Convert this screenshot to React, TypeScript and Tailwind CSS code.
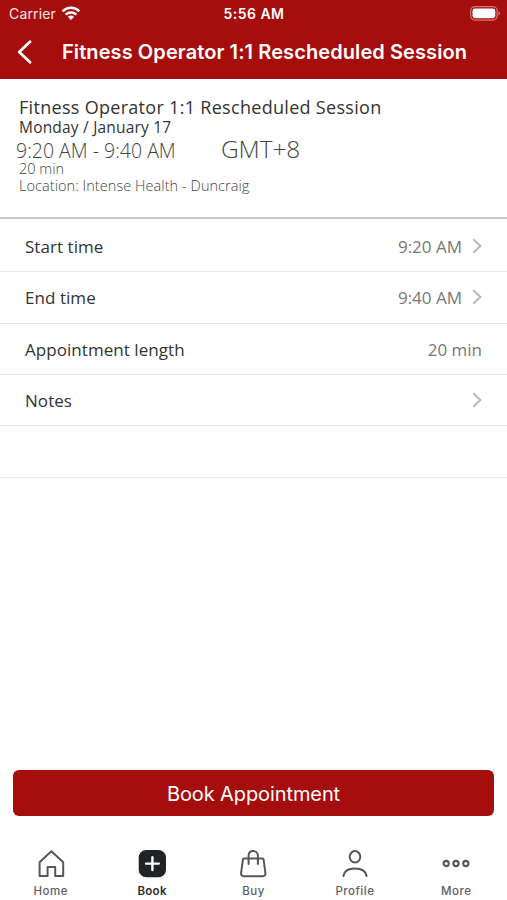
import React from 'react';

interface Row {
  label: string;
  value?: string;
  chevron?: boolean;
}

const rows: Row[] = [
  { label: 'Start time', value: '9:20 AM', chevron: true },
  { label: 'End time', value: '9:40 AM', chevron: true },
  { label: 'Appointment length', value: '20 min' },
  { label: 'Notes', chevron: true },
  { label: '' },
];

const tabs = [
  { label: 'Home', icon: <HomeIcon /> },
  { label: 'Book', icon: <BookIcon />, active: true },
  { label: 'Buy', icon: <BagIcon /> },
  { label: 'Profile', icon: <ProfileIcon /> },
  { label: 'More', icon: <MoreIcon /> },
];

function HomeIcon() {
  return (
    <svg className="w-7 h-7" viewBox="0 0 28 28" fill="none" stroke="#54575b" strokeWidth="2" strokeLinejoin="round">
      <path d="M2.6 26V12.2L14.4 1.2L26.2 12.2V26H18.2V17H10.6V26Z" />
    </svg>
  );
}

function BookIcon() {
  return (
    <svg className="w-7 h-7" viewBox="0 0 28 28" fill="none">
      <rect x="0.7" y="0" width="27.3" height="27.3" rx="7.5" fill="#202327" />
      <path d="M14.4 7.2V20M8 13.6H20.8" stroke="#fff" strokeWidth="2.4" strokeLinecap="round" />
    </svg>
  );
}

function BagIcon() {
  return (
    <svg className="w-7 h-7" viewBox="0 0 28 28" fill="none" stroke="#54575b" strokeWidth="2" strokeLinecap="round" strokeLinejoin="round">
      <path d="M4.9 8.6H23.6Q24.5 8.6 24.6 9.5L26.4 23.2Q26.6 26.2 23.8 26.2H4.6Q1.9 26.2 2.1 23.2L3.9 9.5Q4 8.6 4.9 8.6Z" />
      <path d="M9.6 14V5.8C9.6 3 11.5 1.1 14.2 1.1S18.9 3 18.9 5.8V14" />
    </svg>
  );
}

function ProfileIcon() {
  return (
    <svg className="w-7 h-7" viewBox="0 0 28 28" fill="none" stroke="#54575b" strokeWidth="2" strokeLinecap="round">
      <ellipse cx="14" cy="6.8" rx="5.3" ry="5.7" />
      <path d="M2.4 26C3.2 20.8 7.2 18.5 14 18.5S24.8 20.8 25.6 26" />
    </svg>
  );
}

function MoreIcon() {
  return (
    <svg className="w-7 h-7" viewBox="0 0 28 28" fill="none" stroke="#54575b" strokeWidth="2.1">
      <circle cx="4.2" cy="13.5" r="2.6" />
      <circle cx="14" cy="13.5" r="2.6" />
      <circle cx="23.8" cy="13.5" r="2.6" />
    </svg>
  );
}

function StatusBar() {
  return (
    <div className="h-7 grid grid-cols-3 items-center pl-[9px] pr-[6px] text-[14px] leading-none">
      <div className="flex items-center gap-[5px]">
        <span className="tracking-[0.15px] text-white/90">Carrier</span>
        <svg className="w-5 h-[15px] -mt-[2px]" viewBox="0 0 20 15" fill="none">
          <path d="M1.6 5.3C6.4 0.7 13.6 0.7 18.4 5.3" stroke="#fff" strokeWidth="2.5" />
          <path d="M4.6 8.6C7.7 5.8 12.3 5.8 15.4 8.6" stroke="#fff" strokeWidth="2.5" />
          <path d="M6.8 10.8C8.7 9 11.3 9 13.2 10.8L10 14Z" fill="#fff" />
        </svg>
      </div>
      <span className="-ml-[2px] text-center font-semibold tracking-[0.45px] whitespace-nowrap">5:56 AM</span>
      <svg className="w-[31px] h-[15px] -mt-[2px] justify-self-end" viewBox="0 0 31 15" fill="none">
        <rect x="0.7" y="0.7" width="26.4" height="13.4" rx="4" stroke="#fff" strokeOpacity="0.45" strokeWidth="1.2" />
        <rect x="2.5" y="2.6" width="22.8" height="9.6" rx="2.4" fill="#fff" />
        <path d="M28.5 5.2C30.4 6 30.4 8.8 28.5 9.6Z" fill="#fff" fillOpacity="0.5" />
      </svg>
    </div>
  );
}

export default function App() {
  return (
    <div className="w-[507px] h-[900px] flex flex-col bg-white overflow-hidden font-['Open_Sans',sans-serif] text-[#333]">
      <header className="h-[79px] shrink-0 bg-[#a60d0d] text-white font-[Inter,sans-serif]">
        <StatusBar />
        <div className="h-12 flex items-center pl-[17px]">
          <svg className="w-[15px] h-6 shrink-0" viewBox="0 0 15 24" fill="none" stroke="#fff" strokeWidth="2.8" strokeLinecap="round" strokeLinejoin="round">
            <path d="M13 1.8L2.2 12L13 22.2" />
          </svg>
          <h1 className="ml-[30px] text-[20px] font-semibold tracking-[0.09px] whitespace-nowrap">Fitness Operator 1:1 Rescheduled Session</h1>
        </div>
      </header>

      {/* Appointment summary */}
      <section className="h-[140px] shrink-0 border-b-2 border-[#c5c8ca] pt-[17px] pl-[19px] whitespace-nowrap">
        <h2 className="text-[18px] leading-[22px] tracking-[0.3px]">Fitness Operator 1:1 Rescheduled Session</h2>
        <p className="text-[15.5px] leading-[18px] tracking-[0.2px]">Monday / January 17</p>
        <div className="h-[25px] -ml-[3px] flex items-center font-light text-[#444]">
          <span className="w-[205px] text-[19.5px] leading-6 pt-[5px]">9:20 AM - 9:40 AM</span>
          <span className="text-[24.5px] leading-6 pt-px tracking-[-0.1px]">GMT+8</span>
        </div>
        <p className="text-[14.5px] leading-[15px] font-light text-[#444]">20 min</p>
        <p className="text-[14.5px] leading-[18px] pt-px tracking-[0.06px] font-light text-[#444]">Location: Intense Health - Duncraig</p>
      </section>

      <ul className="shrink-0 pt-0.5">
        {rows.map((row, i) => (
          <li key={i} className="h-[51.35px] border-b border-[#e9e9ea] flex items-center pl-[25px] pr-[25px] pt-px text-[17px]">
            <span className="tracking-[0.05px]">{row.label}</span>
            {row.value && <span className="ml-auto text-[#777]">{row.value}</span>}
            {row.chevron && (
              <svg className={`w-[10px] h-4 mb-[2px] ${row.value ? 'ml-[10px]' : 'ml-auto'}`} viewBox="0 0 10 16" fill="none" stroke="#b9b9bb" strokeWidth="2">
                <path d="M1.2 1.2L8.4 8L1.2 14.8" />
              </svg>
            )}
          </li>
        ))}
      </ul>

      <div className="mt-auto px-[13px]">
        <button className="w-full h-[46px] rounded-[6px] bg-[#a60d0d] text-white text-[20px] tracking-[-0.1px] pt-px font-[Inter,sans-serif]">Book Appointment</button>
      </div>

      <nav className="h-[84px] shrink-0 grid grid-cols-5 pt-[34px] font-[Inter,sans-serif]">
        {tabs.map((tab) => (
          <div key={tab.label} className="flex flex-col items-center">
            {tab.icon}
            <span className={`mt-[5px] text-[11.5px] leading-4 ${tab.active ? 'font-semibold text-[#2b2e32] tracking-[0.3px]' : 'font-medium text-[#5d6064] tracking-[0.5px]'}`}>{tab.label}</span>
          </div>
        ))}
      </nav>
    </div>
  );
}
